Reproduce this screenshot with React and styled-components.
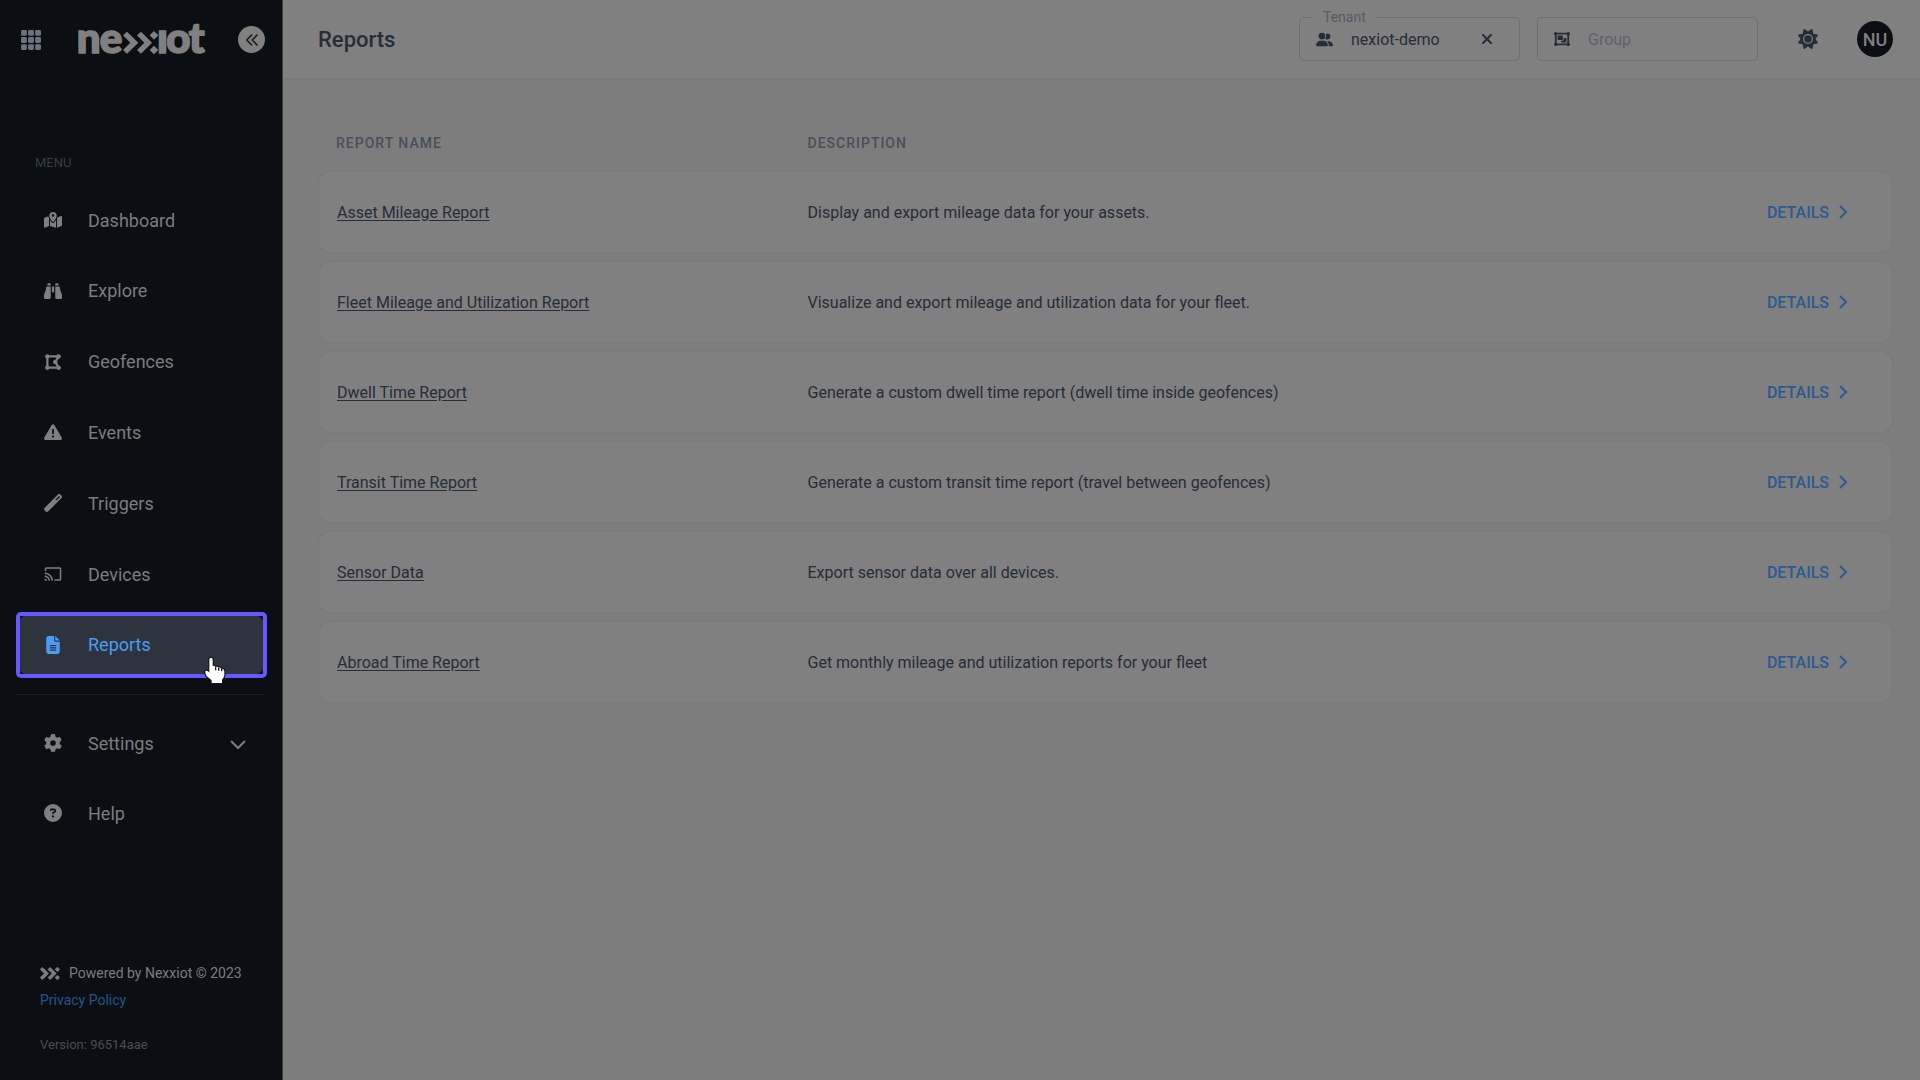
import React, {useState} from 'react';
import styled, {createGlobalStyle, css} from "styled-components";
import {
    FaMapLocationDot,
    FaBinoculars,
    FaDrawPolygon,
    FaTriangleExclamation,
    FaWandMagic,
    FaFileLines,
    FaGear,
    FaCircleQuestion,
    FaUserGroup,
    FaObjectGroup,
    FaXmark,
    FaSun,
} from "react-icons/fa6";
import {MdCast} from "react-icons/md";

const GlobalStyle = createGlobalStyle`
  * {
    box-sizing: border-box;
  }
  body {
    margin: 0;
    background-color: #7d7d7d;
    color: #262d37;
    font-family: Roboto, "Liberation Sans", sans-serif;
    font-size: 16px;
  }
  button, input {
    font-family: inherit;
    font-size: inherit;
    color: inherit;
    padding: 0;
    border: none;
    background: none;
  }
  button {
    cursor: pointer;
  }
  a {
    color: inherit;
  }
`;

const Page = styled.div`
  display: flex;
  min-height: 100vh;
`;

const Sidebar = styled.aside`
  display: flex;
  flex-direction: column;
  flex-shrink: 0;
  width: 283px;
  padding: 0 17px;
  background-color: #0b0f13;
  border-right: 1px solid #3c3f42;
`;

const SidebarTop = styled.div`
  display: flex;
  align-items: center;
  height: 79px;
  padding-left: 4px;
`;

const AppsButton = styled.button`
  display: flex;
  margin-right: 37px;
  color: #6c737e;
`;

const CollapseButton = styled.button`
  display: flex;
  align-items: center;
  justify-content: center;
  width: 27px;
  height: 27px;
  margin-left: 26px;
  border-radius: 50%;
  background-color: #808080;
  color: #15191e;
`;

const MenuTitle = styled.h2`
  margin: 75px 0 17px;
  padding-left: 18px;
  color: #363e48;
  font-size: 13px;
  font-weight: 400;
  line-height: 18px;
`;

const MenuList = styled.ul`
  display: flex;
  flex-direction: column;
  justify-content: space-between;
  height: ${(props) => props.$height};
  margin: 0;
  padding: 0;
  list-style: none;
`;

const MenuItem = styled.li`
  position: relative;
`;

const MenuLink = styled.a`
  display: flex;
  align-items: center;
  height: 62px;
  padding: 0 19px 0 26px;
  border-radius: 14px;
  color: #7b7c7e;
  font-size: 18px;
  text-decoration: none;

  ${(props) => props.$active && css`
    background-color: #2d343e;
    color: #4b9cf5;
  `}
`;

const MenuIcon = styled.span`
  display: flex;
  justify-content: center;
  width: 20px;
  margin-right: 25px;
  color: ${(props) => props.$active ? "#4b9cf5" : "#7f7f80"};
`;

const MenuLabel = styled.span`
  flex: 1;
`;

/* ring around the current menu entry */
const FocusRing = styled.span`
  position: absolute;
  inset: -2px -2px -2px -1px;
  border: 4px solid #6559ff;
  border-radius: 5px;
  pointer-events: none;
`;

const Pointer = styled.svg`
  position: absolute;
  right: 38px;
  bottom: -8px;
  pointer-events: none;
`;

const Divider = styled.hr`
  width: 100%;
  margin: 18px 0 17px;
  border: none;
  border-top: 1px solid #1a1f25;
`;

const SidebarFooter = styled.footer`
  display: flex;
  flex-direction: column;
  align-items: flex-start;
  margin-top: auto;
  padding: 0 0 26px 23px;
  color: #7b7c7e;
  font-size: 14px;
  line-height: 18px;
`;

const PoweredBy = styled.div`
  display: flex;
  align-items: center;
  gap: 9px;
`;

const PrivacyLink = styled.a`
  margin: 9px 0 27px;
  color: #26548a;
  text-decoration: none;
`;

const Version = styled.span`
  color: #4a4d52;
  font-size: 13px;
`;

const Main = styled.main`
  flex: 1;
  min-width: 0;
`;

const Header = styled.header`
  display: flex;
  align-items: center;
  height: 80px;
  padding: 0 27px 0 35px;
  background-color: #808080;
  border-bottom: 2px solid #797979;
`;

const Title = styled.h1`
  margin: 0 auto 0 0;
  font-size: 22px;
  font-weight: 500;
`;

const Field = styled.div`
  position: relative;
  display: flex;
  align-items: center;
  width: 221px;
  height: 44px;
  margin-right: 17px;
  padding: 0 24px 0 16px;
  border: 1px solid #697079;
  border-radius: 5px;
`;

const FieldLabel = styled.label`
  position: absolute;
  top: -9px;
  left: 12px;
  padding: 0 11px;
  background-color: #808080;
  color: #565c65;
  font-size: 14px;
  line-height: 16px;
`;

const FieldInput = styled.input`
  flex: 1;
  min-width: 0;
  margin-left: 18px;
  outline: none;

  &::placeholder {
    color: #5c626b;
    opacity: 1;
  }
`;

const IconButton = styled.button`
  display: flex;
`;

const ThemeButton = styled(IconButton)`
  margin: 0 39px 0 23px;
`;

const Avatar = styled.button`
  width: 36px;
  height: 36px;
  border-radius: 50%;
  background-color: #0b0f14;
  color: #808080;
  font-size: 18px;
  font-weight: 500;
`;

const Content = styled.section`
  padding: 36px 27px 36px 35px;
`;

const ReportTable = styled.table`
  width: 100%;
  border-collapse: separate;
  border-spacing: 0 8px;
  table-layout: fixed;
`;

const HeadCell = styled.th`
  width: ${(props) => props.$width};
  height: 39px;
  padding: 0 17px 2px;
  color: #484f59;
  font-size: 14px;
  font-weight: 500;
  letter-spacing: 1px;
  text-align: left;
  text-transform: uppercase;

  &:first-child {
    padding-left: 18px;
  }
`;

const Cell = styled.td`
  height: 82px;
  padding: 0 17px;
  background-color: #808080;
  border: solid #797979;
  border-width: 1px 0;

  &:first-child {
    border-left-width: 1px;
    border-radius: 12px 0 0 12px;
    padding-left: 18px;
  }
  &:last-child {
    border-right-width: 1px;
    border-radius: 0 12px 12px 0;
    padding-right: 44px;
  }
`;

const ReportLink = styled.a`
  text-underline-offset: 2px;
`;

const DetailsLink = styled.a`
  display: flex;
  align-items: center;
  justify-content: flex-end;
  gap: 10px;
  color: #2a5a91;
  font-weight: 500;
  text-decoration: none;
`;

const menuItems = [
    {name: "Dashboard", icon: <FaMapLocationDot size={18}/>},
    {name: "Explore", icon: <FaBinoculars size={18}/>},
    {name: "Geofences", icon: <FaDrawPolygon size={18}/>},
    {name: "Events", icon: <FaTriangleExclamation size={18}/>},
    {name: "Triggers", icon: <FaWandMagic size={18}/>},
    {name: "Devices", icon: <MdCast size={18}/>},
    {name: "Reports", icon: <FaFileLines size={18}/>},
];

const reports = [
    {name: "Asset Mileage Report", description: "Display and export mileage data for your assets."},
    {name: "Fleet Mileage and Utilization Report", description: "Visualize and export mileage and utilization data for your fleet."},
    {name: "Dwell Time Report", description: "Generate a custom dwell time report (dwell time inside geofences)"},
    {name: "Transit Time Report", description: "Generate a custom transit time report (travel between geofences)"},
    {name: "Sensor Data", description: "Export sensor data over all devices."},
    {name: "Abroad Time Report", description: "Get monthly mileage and utilization reports for your fleet"},
];

function AppsIcon() {
    const steps = [0, 20.5, 41];
    return (
        <svg width="20" height="20" viewBox="0 0 58 58" fill="currentColor">
            {steps.map((y) => steps.map((x) => (
                <rect key={`${x}-${y}`} x={x} y={y} width="17" height="17" rx="4"/>
            )))}
        </svg>
    );
}

function Chevrons() {
    return (
        <>
            <path d="M0 11 12 0 46 33 12 66 0 55 22 33z"/>
            <path d="M42 11 54 0 87 33 54 66 42 55 64 33z"/>
            <path d="M93 -2 106 11 93 24 80 11z"/>
            <path d="M93 42 106 55 93 68 80 55z"/>
        </>
    );
}

function Logo() {
    return (
        <svg width="134" height="64" viewBox="0 -57 402 192" fill="#808080" role="img" aria-label="nexxiot">
            <g fontFamily="Lato, sans-serif" fontWeight="900" fontSize="126" stroke="#808080" strokeWidth="5">
                <text x="-4" y="79">n</text>
                <text x="65" y="79">e</text>
                <text x="237" y="79">ı</text>
                <text x="265" y="79">o</text>
                <text x="332" y="79">t</text>
            </g>
            <g transform="translate(135 14)">
                <Chevrons/>
            </g>
        </svg>
    );
}

function HandPointer() {
    return (
        <Pointer width="24" height="28" viewBox="-3 -2 72 84">
            <path
                d="M16 9q0-6 5-6t5 6v19q5-2 8 3 6-3 9 2 6-2 8 3 9-1 10 7v12q0 8-7 14v10H23v-8L7 57Q3 50 4 43q7-3 12 5z"
                fill="#fff" stroke="#14161c" strokeWidth="7" strokeLinejoin="round" paintOrder="stroke"
            />
            <path d="M35 32v9M44 34v8M53 37v7" stroke="#14161c" strokeWidth="4"/>
        </Pointer>
    );
}

function SideMenu() {
    const [active, setActive] = useState("Reports");

    return (
        <nav>
            <MenuTitle>MENU</MenuTitle>
            <MenuList $height="487px">
                {menuItems.map((item) => (
                    <MenuItem key={item.name}>
                        <MenuLink href="#" $active={active === item.name} onClick={() => setActive(item.name)}>
                            <MenuIcon $active={active === item.name}>{item.icon}</MenuIcon>
                            <MenuLabel>{item.name}</MenuLabel>
                        </MenuLink>
                        {active === item.name && <><FocusRing/><HandPointer/></>}
                    </MenuItem>
                ))}
            </MenuList>
            <Divider/>
            <MenuList $height="132px">
                <MenuItem>
                    <MenuLink href="#">
                        <MenuIcon><FaGear size={18}/></MenuIcon>
                        <MenuLabel>Settings</MenuLabel>
                        <svg width="16" height="14" viewBox="0 0 16 14" fill="none" stroke="currentColor" strokeWidth="2">
                            <path d="M1 5 8 12 15 5"/>
                        </svg>
                    </MenuLink>
                </MenuItem>
                <MenuItem>
                    <MenuLink href="#">
                        <MenuIcon><FaCircleQuestion size={18}/></MenuIcon>
                        <MenuLabel>Help</MenuLabel>
                    </MenuLink>
                </MenuItem>
            </MenuList>
        </nav>
    );
}

function TopBar() {
    const [tenant, setTenant] = useState("nexiot-demo");
    const [group, setGroup] = useState("");

    return (
        <Header>
            <Title>Reports</Title>
            <Field>
                <FieldLabel htmlFor="tenant">Tenant</FieldLabel>
                <FaUserGroup size={17}/>
                <FieldInput id="tenant" value={tenant} onChange={(e) => setTenant(e.target.value)}/>
                <IconButton aria-label="Clear tenant" onClick={() => setTenant("")}>
                    <FaXmark size={16}/>
                </IconButton>
            </Field>
            <Field>
                <FaObjectGroup size={16}/>
                <FieldInput aria-label="Group" placeholder="Group" value={group} onChange={(e) => setGroup(e.target.value)}/>
            </Field>
            <ThemeButton aria-label="Theme"><FaSun size={20}/></ThemeButton>
            <Avatar>NU</Avatar>
        </Header>
    );
}

function App() {
    return (
        <Page>
            <GlobalStyle/>
            <Sidebar>
                <SidebarTop>
                    <AppsButton aria-label="Apps"><AppsIcon/></AppsButton>
                    <Logo/>
                    <CollapseButton aria-label="Collapse menu">
                        <svg width="14" height="14" viewBox="0 0 14 14" fill="none" stroke="currentColor" strokeWidth="1.5">
                            <path d="M7 1.5 1.8 7 7 12.5M12.5 1.5 7.3 7l5.2 5.5"/>
                        </svg>
                    </CollapseButton>
                </SidebarTop>
                <SideMenu/>
                <SidebarFooter>
                    <PoweredBy>
                        <svg width="20" height="13" viewBox="0 -2 106 70" fill="currentColor" stroke="currentColor" strokeWidth="3">
                            <Chevrons/>
                        </svg>
                        Powered by Nexxiot © 2023
                    </PoweredBy>
                    <PrivacyLink href="#">Privacy Policy</PrivacyLink>
                    <Version>Version: 96514aae</Version>
                </SidebarFooter>
            </Sidebar>
            <Main>
                <TopBar/>
                <Content>
                    <ReportTable>
                        <thead>
                            <tr>
                                <HeadCell $width="30%">Report name</HeadCell>
                                <HeadCell>Description</HeadCell>
                                <HeadCell $width="12%" aria-label="Details"/>
                            </tr>
                        </thead>
                        <tbody>
                            {reports.map((report) => (
                                <tr key={report.name}>
                                    <Cell><ReportLink href="#">{report.name}</ReportLink></Cell>
                                    <Cell>{report.description}</Cell>
                                    <Cell>
                                        <DetailsLink href="#">
                                            DETAILS
                                            <svg width="9" height="14" viewBox="0 0 9 14" fill="none" stroke="currentColor" strokeWidth="2">
                                                <path d="M1 1 7 7 1 13"/>
                                            </svg>
                                        </DetailsLink>
                                    </Cell>
                                </tr>
                            ))}
                        </tbody>
                    </ReportTable>
                </Content>
            </Main>
        </Page>
    );
}

export default App;
